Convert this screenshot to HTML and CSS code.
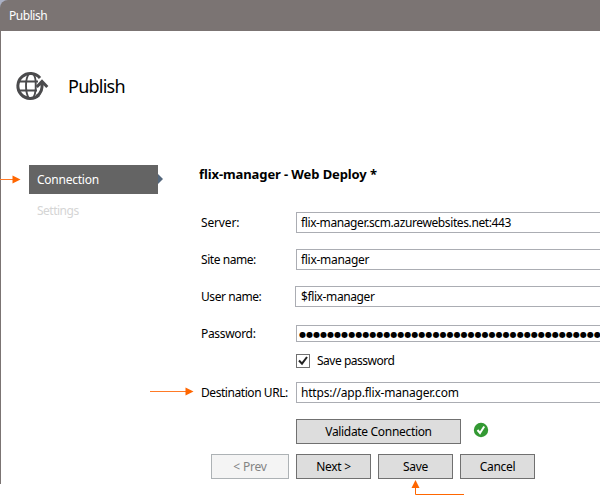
FILE: index.html
```html
<!DOCTYPE html>
<html lang="en">
<head>
<meta charset="utf-8">
<title>Publish</title>
<link rel="stylesheet" href="styles.css">
</head>
<body>
<div class="window">
  <header class="titlebar"><span class="titlebar-text">Publish</span></header>
  <div class="content">
    <div class="banner">
      <svg class="globe" width="34" height="30" viewBox="0 0 34 30" fill="none" stroke="#4b4b4d">
        <path d="M25 7A12.500 12.500 0 1 0 24 24" stroke-width="3"/>
        <path d="M4 10.500H23M4 19.500H22" stroke-width="1.900"/>
        <path d="M14 2.500C10 8 10 21 14 27.500M18 2.500C20 5 20.700 8.500 20.700 12V18C20.500 22 19.500 25 18 27.500" stroke-width="1.900"/>
        <path d="M21.700 16L27 10.500L32.300 16M27 11C27.500 18 26.500 22 21.500 25.500" stroke-width="3"/>
      </svg>
      <h1 class="banner-title">Publish</h1>
    </div>
    <div class="main">
      <nav class="sidebar">
        <div class="tab tab-active"><span class="tab-text">Connection</span></div>
        <div class="tab tab-muted"><span class="settings-text">Settings</span></div>
      </nav>
      <section class="panel">
        <h2 class="profile"><span>flix-manager - Web Deploy *</span></h2>
        <div class="row"><label><span class="l-server">Server:</span></label><div class="field"><span class="v-server">flix-manager.scm.azurewebsites.net:443</span></div></div>
        <div class="row"><label><span class="l-site">Site name:</span></label><div class="field"><span class="v-site">flix-manager</span></div></div>
        <div class="row"><label><span class="l-user">User name:</span></label><div class="field field-user"><span class="v-user">$flix-manager</span></div></div>
        <div class="row row-password"><label><span class="l-pass">Password:</span></label><div class="field field-password"><span class="dots">●●●●●●●●●●●●●●●●●●●●●●●●●●●●●●●●●●●●●●●●●●●</span></div></div>
        <div class="remember">
          <span class="checkbox"><svg width="12" height="12" viewBox="0 0 12 12"><path d="M2 5.500L5 8.700L10 2" fill="none" stroke="#222" stroke-width="2"/></svg></span>
          <span class="l-save">Save password</span>
        </div>
        <div class="row row-url"><label><span class="l-url">Destination URL:</span></label><div class="field"><span class="v-url">https://app.flix-manager.com</span></div></div>
        <div class="validate">
          <button class="button button-wide"><span class="b-validate">Validate Connection</span></button>
          <svg class="ok" width="16" height="16" viewBox="0 0 16 16"><circle cx="8" cy="8" r="7.200" fill="#339933"/><path d="M4.500 8L7 11L11.200 4.500" fill="none" stroke="#fff" stroke-width="2"/></svg>
        </div>
        <div class="actions">
          <button class="button button-prev" disabled><span class="b-prev">&lt; Prev</span></button>
          <button class="button"><span class="b-short">Next &gt;</span></button>
          <button class="button"><span class="b-short">Save</span></button>
          <button class="button"><span class="b-short">Cancel</span></button>
        </div>
      </section>
    </div>
  </div>
</div>
<svg class="callout callout-connection" width="21" height="10" viewBox="0 0 21 10"><path d="M0 5.500H13" stroke="#ff7a26"/><path d="M12.500 1.500L20.500 5.500L12.500 9.500Z" fill="#ff6600"/></svg>
<svg class="callout callout-url" width="44" height="10" viewBox="0 0 44 10"><path d="M0 5.500H36" stroke="#ff7a26"/><path d="M35.500 1.500L43.500 5.500L35.500 9.500Z" fill="#ff6600"/></svg>
<svg class="callout callout-save" width="54" height="16" viewBox="0 0 54 16"><path d="M5.500 8V14.500H54" fill="none" stroke="#ff6600"/><path d="M1.500 8L5.500 0L9.500 8Z" fill="#ff6600"/></svg>
</body>
</html>
```
FILE: styles.css
```css
* { box-sizing: border-box; }
body {
  margin: 0;
  width: 600px;
  height: 496px;
  overflow: hidden;
  background: #fff;
  color: #000;
  font: 12px/16px "Noto Sans", "Open Sans", sans-serif;
}
.window { height: 484px; background: linear-gradient(#aab0c4 0 10px, #fff 10px); }
.titlebar {
  height: 31px;
  padding: 8px 0 0 9px;
  background: #7b7473;
  border-top-left-radius: 8px;
  color: #fff;
}
.titlebar-text { letter-spacing: -.45px; }
.content { height: 453px; border-left: 1px solid #7b7473; }
.banner { display: flex; height: 134px; padding: 40px 0 0 14px; }
.banner-title {
  margin: 2px 0 0 19px;
  font-size: 18px;
  line-height: 26px;
  font-weight: 400;
  letter-spacing: -.75px;
}
.main { display: flex; }
.sidebar { width: 129px; margin-left: 28px; }
.tab { position: relative; height: 29px; padding: 7px 8px 0; white-space: nowrap; }
.tab-text { letter-spacing: -.25px; }
.tab-active { background: #646464; color: #fff; }
.tab-active::after {
  content: "";
  position: absolute;
  left: 129px;
  top: 9px;
  border: 5px solid transparent;
  border-left-color: #54677c;
  border-right-width: 0;
}
.tab-muted { margin-top: 2px; color: #d5d5d5; }
.settings-text { letter-spacing: -.5px; }
.panel { flex: 1; margin-left: 41px; min-width: 0; }
.profile {
  height: 47px;
  margin: 0;
  font-size: 13px;
  line-height: 19px;
  letter-spacing: -.1px;
  white-space: nowrap;
}
.row { display: flex; height: 21px; margin-bottom: 16px; white-space: nowrap; }
.row label { width: 97px; padding: 3px 0 0 2px; letter-spacing: -.44px; }
.row label .l-server { letter-spacing: -.15px; }
.row label .l-pass { letter-spacing: -.33px; }
.field {
  flex: 1;
  min-width: 0;
  overflow: hidden;
  padding: 2px 0 0 4px;
  border: 1px solid #abadb3;
  border-right: 0;
  background: #fff;
  letter-spacing: -.39px;
}
.v-site { letter-spacing: -.3px; }
.v-url { letter-spacing: -.2px; }
.field-user { margin-left: -1px; padding-left: 5px; }
.row-password { margin-bottom: 10px; }
.field-password { height: 17px; margin-top: 2px; padding: 1px 0 0 2px; }
.dots {
  display: block;
  font: 8px/15px "DejaVu Sans", sans-serif;
  letter-spacing: .040px;
  text-rendering: geometricPrecision;
}
.remember { display: flex; height: 28px; padding-left: 97px; }
.checkbox { width: 14px; height: 14px; margin-right: 7px; border: 1px solid #707070; }
.checkbox svg { display: block; }
.remember > .l-save { margin-top: -1px; letter-spacing: -.48px; }
.validate { display: flex; padding-left: 97px; }
.button {
  width: 75px;
  height: 25px;
  padding: 0;
  border: 1px solid #707070;
  background: #ddd;
  color: #000;
  font: inherit;
  white-space: nowrap;
}
.button-wide { width: 165px; }
.b-validate { letter-spacing: -.32px; }
.b-short { letter-spacing: -.3px; }
.button-prev { width: 78px; border-color: #adb2b5; background: #f4f4f4; color: #838383; }
.b-prev { letter-spacing: -.2px; }
.ok { margin: 3px 0 0 12px; }
.actions { display: flex; gap: 7px; margin: 10px 0 0 12px; }
.callout { position: absolute; }
.callout-connection { left: 0; top: 174px; }
.callout-url { left: 150px; top: 386px; }
.callout-save { left: 410px; top: 480px; }
```
